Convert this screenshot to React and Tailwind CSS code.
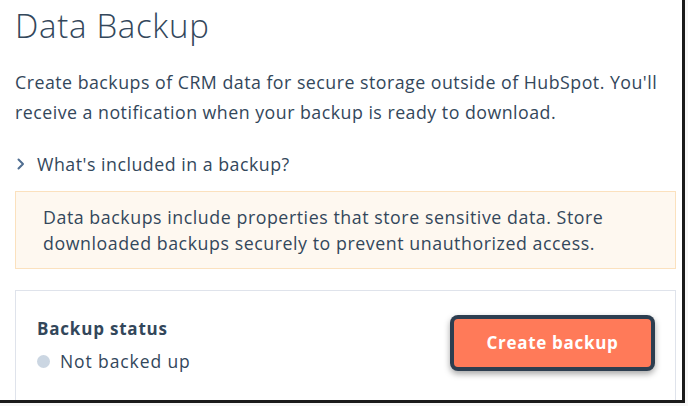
export default function App() {
  return (
    <div className="w-[688px] h-[406px] bg-[#f7f7f7] font-['Open_Sans',sans-serif] text-[#33475b]">
      <div className="w-[685px] h-[403px] overflow-hidden bg-white border-r-[3px] border-b-[3px] border-[#1a1a1a]">
        <div className="pl-[15px] pr-[6px]">
          <h1 className="pt-[6px] text-[33px] leading-[40px] font-light tracking-[0.7px]">Data Backup</h1>

          <p className="mt-[21px] text-[17.8px] leading-[30px] tracking-[0.48px]">
            Create backups of CRM data for secure storage outside of HubSpot. You'll<br />
            receive a notification when your backup is ready to download.
          </p>

          <div className="mt-[24px] flex items-center h-[26px]">
            <svg className="w-[10px] h-[12px] ml-[1px]" viewBox="0 0 10 12" fill="none">
              <path d="M2.5 1.5L7 6l-4.5 4.5" stroke="#506e91" strokeWidth="2" strokeLinecap="round" strokeLinejoin="round" />
            </svg>
            <span className="ml-[11px] text-[17.8px] tracking-[0.5px]">What's included in a backup?</span>
          </div>

          <div className="mt-[14px] h-[78px] bg-[#fef8f0] border border-[#fbe1be] pl-[27px] pt-[12px] text-[17.8px] leading-[26px] tracking-[0.55px]">
            Data backups include properties that store sensitive data. Store<br />
            downloaded backups securely to prevent unauthorized access.
          </div>

          <div className="mt-[21px] h-[140px] border border-[#dfe3eb] flex items-start justify-between pl-[21px] pr-[20px]">
            <div className="pt-[26px]">
              <div className="text-[17px] font-bold leading-[24px] tracking-[0.8px]">Backup status</div>
              <div className="mt-[8px] flex items-center">
                <span className="w-[13px] h-[13px] rounded-full bg-[#cbd6e2]" />
                <span className="ml-[10px] text-[17.5px] leading-[24px] tracking-[0.9px]">Not backed up</span>
              </div>
            </div>
            <div className="mt-[24px] rounded-[8px] bg-[#2d3e50] p-[4px] shadow-[0_3px_6px_rgba(0,0,0,0.35)]">
              <button className="w-[197px] h-[48px] rounded-[4px] bg-[#ff7a59] text-white text-[17px] font-bold tracking-[0.7px]">
                Create backup
              </button>
            </div>
          </div>
        </div>
      </div>
    </div>
  )
}
